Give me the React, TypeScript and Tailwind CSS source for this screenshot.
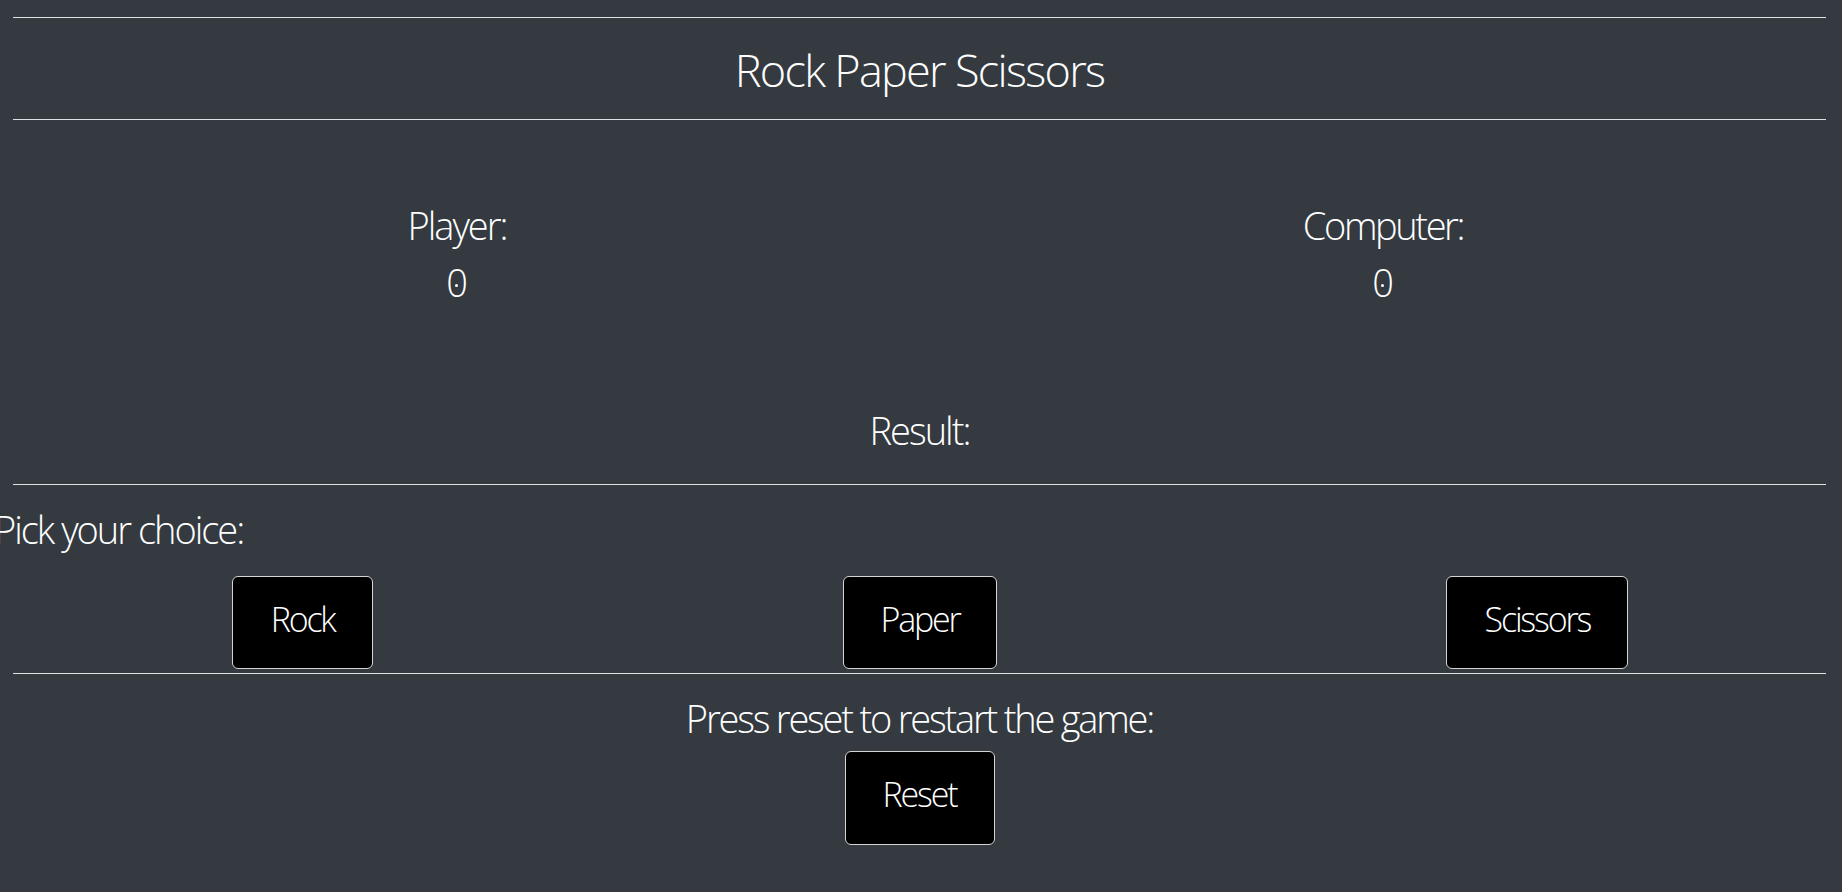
import React from "react";

function Hr() {
  return <div className="ml-[13px] mr-[16px] h-px bg-[#dee2e6]" />;
}

function Btn({ children, w }: { children: React.ReactNode; w: string }) {
  return (
    <button
      className={`${w} h-[93px] pb-[8px] flex items-center justify-center bg-black border border-[#d4d4d4] rounded-[6px] text-white text-[34px] leading-none tracking-[-2.2px]`}
    >
      {children}
    </button>
  );
}

function Zero() {
  return (
    <span className="relative inline-block tracking-normal">
      0
      <span className="absolute left-1/2 top-[26px] w-[3px] h-[3px] -ml-[1.5px] rounded-full bg-white" />
    </span>
  );
}

export default function App() {
  return (
    <div className="relative min-h-screen w-full overflow-hidden bg-[#343a40] text-white font-['Open_Sans',sans-serif] font-light pt-[17px]">
      <Hr />
      <div className="h-[101px] pt-[29px] text-center ml-[13px] mr-[16px]">
        <h1 className="text-[45px] leading-[45px] tracking-[-1.7px]">Rock Paper Scissors</h1>
      </div>
      <Hr />
      <div className="grid grid-cols-2 ml-[-6px] mr-[-4px] mt-[81px] tracking-[-2px]">
        <div className="flex flex-col items-center">
          <div className="text-[38px] leading-[48px]">Player:</div>
          <div className="text-[38px] leading-[48px] mt-[9px]"><Zero /></div>
        </div>
        <div className="flex flex-col items-center">
          <div className="text-[38px] leading-[48px] tracking-[-2.4px]">Computer:</div>
          <div className="text-[38px] leading-[48px] mt-[9px]"><Zero /></div>
        </div>
      </div>
      <div className="mt-[100px] text-center text-[38px] leading-[48px] tracking-[-2px] ml-[13px] mr-[16px]">Result:</div>
      <div className="mt-[30px]">
        <Hr />
      </div>
      <div className="mt-[20px] ml-[-6px] text-[38px] leading-[48px] tracking-[-2px] whitespace-nowrap">Pick your choice:</div>
      <div className="grid grid-cols-3 ml-[-6px] mr-[-4px] mt-[23px]">
        <div className="flex justify-center"><Btn w="w-[141px]">Rock</Btn></div>
        <div className="flex justify-center"><Btn w="w-[154px]">Paper</Btn></div>
        <div className="flex justify-center"><Btn w="w-[182px]">Scissors</Btn></div>
      </div>
      <div className="mt-[4px]">
        <Hr />
      </div>
      <div className="mt-[20px] text-center text-[38px] leading-[48px] tracking-[-2.2px] ml-[13px] mr-[16px]">Press reset to restart the game:</div>
      <div className="mt-[9px] flex justify-center ml-[13px] mr-[16px]">
        <button className="w-[150px] h-[94px] pb-[8px] flex items-center justify-center bg-black border border-[#d4d4d4] rounded-[6px] text-white text-[34px] leading-none tracking-[-2.2px]">
          Reset
        </button>
      </div>
    </div>
  );
}
